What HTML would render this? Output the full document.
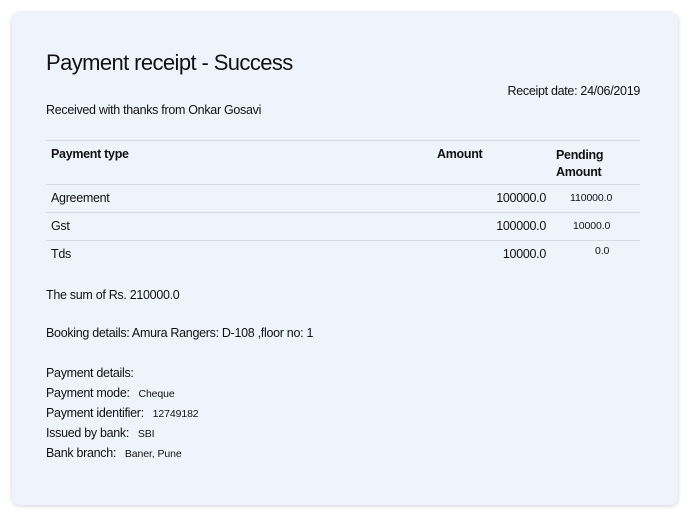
<!DOCTYPE html>
<html><head><style>
body{margin:0;background:#fff;font-family:"Liberation Sans",Arial,sans-serif;color:#111;}
.card{position:absolute;left:12px;top:12px;width:666px;height:493px;background:#eff4fc;border-radius:8px;box-shadow:0 1px 4px rgba(0,0,0,0.18);}
.t{position:absolute;white-space:nowrap;letter-spacing:-0.3px;}
.l{position:absolute;left:46px;width:594px;height:1px;background:#d6dbe2;}
.s13{font-size:12.5px}
.s11{font-size:10.5px;letter-spacing:-0.1px}
</style></head><body>
<div class="card"></div>
<div class="t" style="left:46px;top:50px;font-size:22px;letter-spacing:-0.6px;">Payment receipt - Success</div>
<div class="t s13" style="right:49px;top:84px;">Receipt date: 24/06/2019</div>
<div class="t s13" style="left:46px;top:103px;">Received with thanks from Onkar Gosavi</div>
<div class="l" style="top:140px"></div>
<div class="t s13" style="left:51px;top:147px;font-weight:bold;">Payment type</div>
<div class="t s13" style="left:437px;top:147px;font-weight:bold;">Amount</div>
<div class="t s13" style="left:556px;top:147px;font-weight:bold;line-height:17px;">Pending<br>Amount</div>
<div class="l" style="top:184px"></div>
<div class="t s13" style="left:51px;top:191px;">Agreement</div>
<div class="t s13" style="right:143px;top:191px;">100000.0</div>
<div class="t s11" style="left:570px;top:192px;">110000.0</div>
<div class="l" style="top:212px"></div>
<div class="t s13" style="left:51px;top:219px;">Gst</div>
<div class="t s13" style="right:143px;top:219px;">100000.0</div>
<div class="t s11" style="left:573px;top:220px;">10000.0</div>
<div class="l" style="top:240px"></div>
<div class="t s13" style="left:51px;top:247px;">Tds</div>
<div class="t s13" style="right:143px;top:247px;">10000.0</div>
<div class="t s11" style="left:595px;top:245px;">0.0</div>
<div class="t s13" style="left:46px;top:288px;">The sum of Rs. 210000.0</div>
<div class="t s13" style="left:46px;top:326px;">Booking details: Amura Rangers: D-108 ,floor no: 1</div>
<div class="t s13" style="left:46px;top:366px;">Payment details:</div>
<div class="t s13" style="left:46px;top:386px;">Payment mode: <span class="s11">&nbsp;&nbsp;Cheque</span></div>
<div class="t s13" style="left:46px;top:406px;">Payment identifier: <span class="s11">&nbsp;&nbsp;12749182</span></div>
<div class="t s13" style="left:46px;top:426px;">Issued by bank: <span class="s11">&nbsp;&nbsp;SBI</span></div>
<div class="t s13" style="left:46px;top:446px;">Bank branch: <span class="s11">&nbsp;&nbsp;Baner, Pune</span></div>
</body></html>
